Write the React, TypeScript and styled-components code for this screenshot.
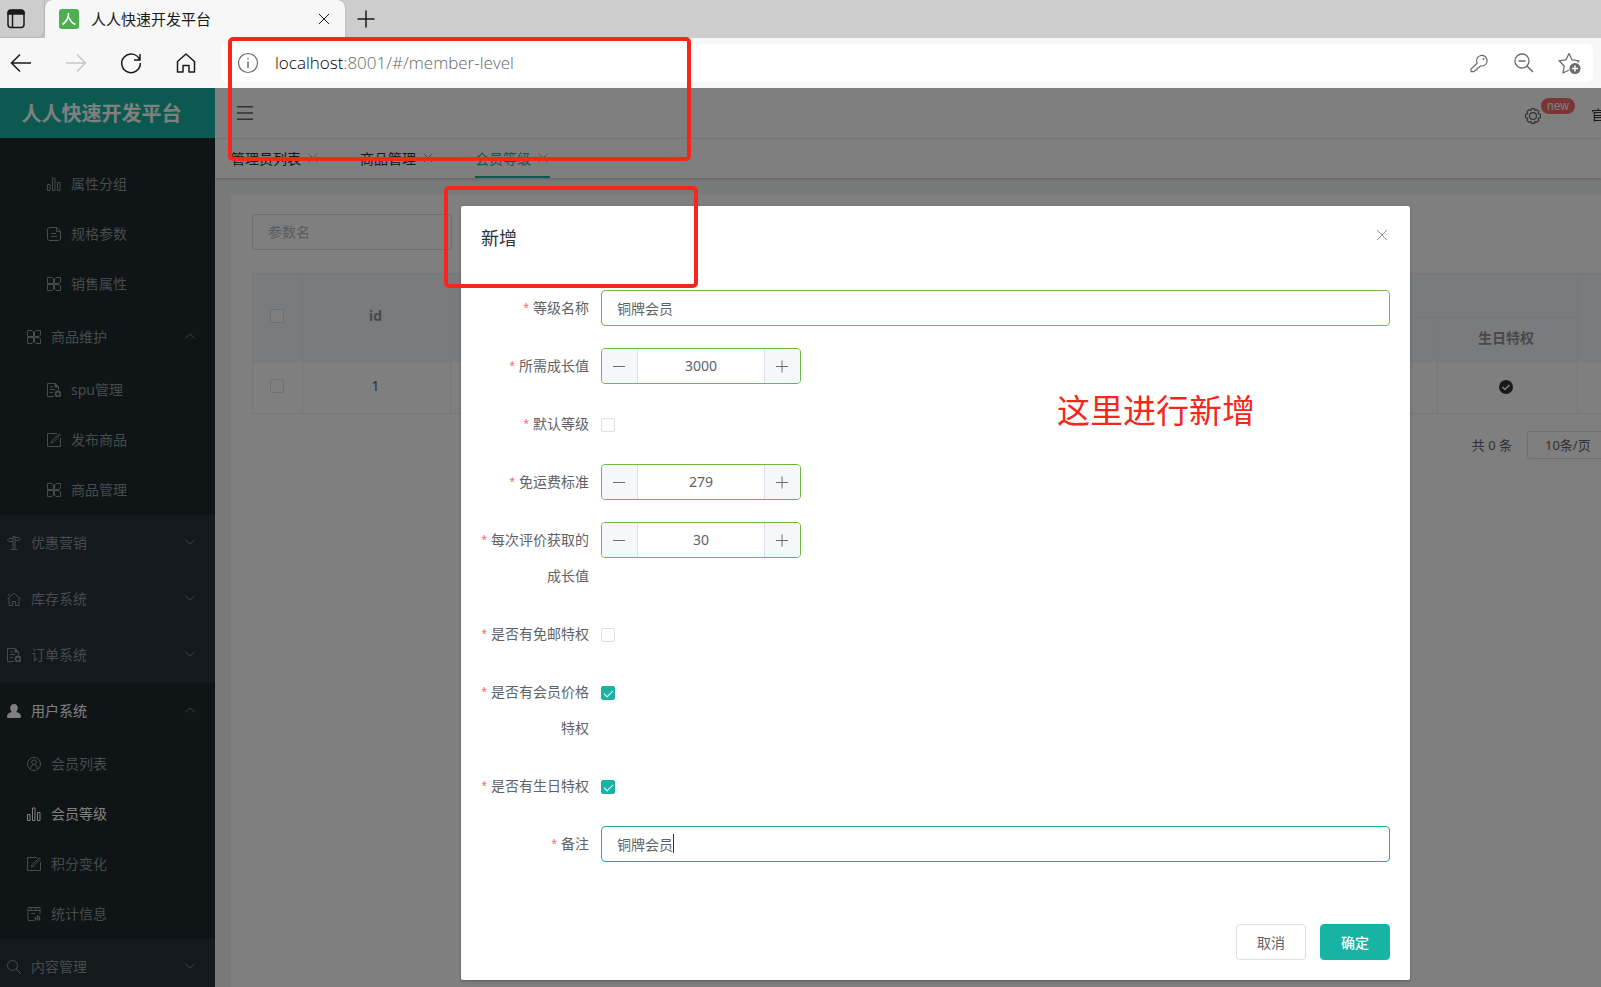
import React, { useState } from "react";
import styled, { createGlobalStyle, css } from "styled-components";

const GlobalStyle = createGlobalStyle`
  * { box-sizing: border-box; }
  html, body { margin: 0; height: 100%; }
  body, button, input, select {
    font-family: "Noto Sans", "Noto Sans CJK SC", sans-serif;
    font-size: 14px;
  }
  button { cursor: pointer; }
`;

const Page = styled.div`
  position: relative;
  display: flex;
  flex-direction: column;
  height: 100vh;
  overflow: hidden;
`;

/* ---------- Browser frame ---------- */

const PlainButton = styled.button`
  display: flex;
  align-items: center;
  justify-content: center;
  padding: 0;
  border: 0;
  background: none;
  color: inherit;
`;

const TabStrip = styled.div`
  display: flex;
  align-items: center;
  height: 38px;
  flex: none;
  background: #cdcdcd;
  color: #1a1a1a;
`;

const TabActions = styled(PlainButton)`
  width: 45px;
  height: 38px;
  padding-right: 13px;
  border-radius: 0 0 6px 0;
  box-shadow: inset -1px -1px 1px #b8b8b8;
`;

const BrowserTab = styled.div`
  display: flex;
  align-items: center;
  gap: 12px;
  width: 300px;
  height: 38px;
  padding: 0 14px;
  background: #f7f7f7;
  border-radius: 8px 8px 0 0;
  box-shadow: 0 0 2px #a8a8a8;
  font-size: 15px;
`;

const TabTitle = styled.span`
  flex: 1;
  padding-bottom: 2px;
`;

const NewTab = styled(PlainButton)`
  width: 42px;
  height: 38px;
`;

const Toolbar = styled.div`
  position: relative;
  display: flex;
  align-items: center;
  height: 50px;
  flex: none;
  padding-right: 8px;
  background: #f7f7f7;
  color: #1a1a1a;
`;

const NavButtons = styled.div`
  display: flex;
  gap: 31px;
  width: 221px;
  padding-left: 9px;
`;

const NavButton = styled(PlainButton)`
  width: 24px;
  height: 24px;
  color: ${(p) => (p.disabled ? "#c6c6c6" : "#1a1a1a")};
`;

const AddressBar = styled.div`
  display: flex;
  align-items: center;
  flex: 1;
  gap: 21px;
  height: 38px;
  padding: 0 12px 0 17px;
  border-radius: 6px;
  background: #fff;
  color: #6b6b6b;
`;

const Url = styled.div`
  flex: 1;
  margin-left: -8px;
  padding-bottom: 2px;
  font-family: "Open Sans", "Noto Sans", sans-serif;
  font-size: 17px;
  font-weight: 300;
  color: #666;
`;

const Host = styled.span`
  color: #000;
`;

/* ---------- Application shell ---------- */

const AppArea = styled.div`
  position: relative;
  display: flex;
  flex: 1;
  min-height: 0;
  background: #f1f4f5;
`;

const Sidebar = styled.nav`
  width: 215px;
  flex: none;
  overflow: hidden;
  background: #263238;
`;

const Brand = styled.h1`
  display: flex;
  align-items: center;
  justify-content: center;
  height: 50px;
  margin: 0;
  padding: 0 12px 2px 0;
  background: #17b3a3;
  color: #fff;
  font-size: 20px;
  font-weight: 700;
`;

const MenuGroup = styled.div<{ $dark?: boolean; $clipped?: boolean }>`
  padding-top: ${(p) => (p.$clipped ? 21 : 0)}px;
  background: ${(p) => (p.$dark ? "#1e282c" : "transparent")};
`;

const MenuEntry = styled.a<{ $level: number; $tall?: boolean; $active?: boolean }>`
  display: flex;
  align-items: center;
  gap: 10px;
  height: ${(p) => (p.$tall ? 56 : 50)}px;
  padding: 0 18px 0 ${(p) => 7 + p.$level * 20}px;
  color: ${(p) => (p.$active ? "#fff" : "#8a979e")};
  text-decoration: none;
`;

const MenuLabel = styled.span`
  flex: 1;
  padding-bottom: 2px;
`;

const MenuArrow = styled.span`
  display: flex;
  padding: 0 1px 3px 0;
  color: #8a979e;
`;

const Main = styled.div`
  display: flex;
  flex-direction: column;
  flex: 1;
  min-width: 0;
`;

const TopBar = styled.header`
  display: flex;
  align-items: center;
  height: 51px;
  flex: none;
  padding-left: 22px;
  background: #fff;
  border-bottom: 1px solid #f0f1f4;
  color: #606266;
`;

const Spacer = styled.div`
  flex: 1;
`;

const SettingsButton = styled(PlainButton)`
  position: relative;
  width: 16px;
  height: 16px;
  margin: 6px 50px 0 0;
`;

const Badge = styled.span`
  position: absolute;
  left: 16px;
  top: -10px;
  height: 16px;
  padding: 0 6px;
  border-radius: 8px;
  background: #f56c6c;
  color: #fff;
  font: 12px/16px "Liberation Sans", sans-serif;
`;

const SiteLink = styled.a`
  width: 10px;
  overflow: hidden;
  white-space: nowrap;
  margin-top: 2px;
  color: #303133;
  text-decoration: none;
`;

const PageTabs = styled.div`
  display: flex;
  gap: 40px;
  height: 39px;
  flex: none;
  padding-left: 16px;
  background: #fff;
  box-shadow: 0 1px 3px rgba(0, 0, 0, 0.2);
`;

const PageTab = styled.div<{ $active?: boolean }>`
  display: flex;
  align-items: center;
  gap: 5px;
  color: ${(p) => (p.$active ? "#17b3a3" : "#303133")};
  border-bottom: 2px solid ${(p) => (p.$active ? "#17b3a3" : "transparent")};
`;

const TabClose = styled(PlainButton)`
  width: 14px;
  height: 14px;
  color: #909399;
`;

const Card = styled.section`
  flex: 1;
  margin: 16px 0 0 16px;
  padding: 19px 0 0 20px;
  background: #fff;
  border: 1px solid #fcfcfd;
  border-width: 1px 0 0 1px;
`;

const SearchInput = styled.input`
  display: block;
  width: 200px;
  height: 36px;
  padding: 0 15px 2px;
  border: 1px solid #dcdfe6;
  border-radius: 4px;
  &::placeholder { color: #b4b8c0; }
`;

const DataTable = styled.table`
  width: 100%;
  margin-top: 23px;
  table-layout: fixed;
  border-collapse: collapse;
  color: #606266;
  line-height: 20px;
  text-align: center;
  th, td {
    padding: 0 2px 4px 0;
    border: 1px solid #ebeef5;
    border-right: 0;
  }
  th {
    height: 44px;
    background: #f5f7fa;
    color: #909399;
    font-weight: 700;
  }
  td { height: 52px; }
  svg { vertical-align: middle; }
  input { display: flex; margin: 0 auto; }
`;

const Column = styled.col<{ $width?: number }>`
  width: ${(p) => (p.$width ? `${p.$width}px` : "auto")};
`;

const Pagination = styled.div`
  display: flex;
  align-items: center;
  justify-content: flex-end;
  gap: 15px;
  margin-top: 17px;
  color: #606266;
`;

const Total = styled.span`
  padding-bottom: 2px;
  font-size: 13px;
`;

const PageSize = styled.select`
  appearance: none;
  width: 74px;
  height: 28px;
  padding: 0 0 0 17px;
  border: 1px solid #dcdfe6;
  border-right: 0;
  border-radius: 3px 0 0 3px;
  background: #fff;
  color: #606266;
  font-size: 13px;
`;

/* ---------- Dialog ---------- */

const Overlay = styled.div`
  position: absolute;
  inset: 0;
  background: rgba(0, 0, 0, 0.5);
`;

const Dialog = styled.form`
  margin: 118px 191px 0 461px;
  background: #fff;
  border-radius: 2px;
  box-shadow: 0 1px 3px rgba(0, 0, 0, 0.3);
`;

const DialogHeader = styled.header`
  display: flex;
  justify-content: space-between;
  padding: 20px 20px 10px;
`;

const DialogTitle = styled.h2`
  margin: 0;
  color: #303133;
  font-size: 18px;
  font-weight: 400;
  line-height: 24px;
`;

const DialogClose = styled(PlainButton)`
  width: 16px;
  height: 18px;
  color: #909399;
`;

const DialogBody = styled.div`
  padding: 30px 20px;
`;

const FormRow = styled.div`
  display: flex;
  align-items: flex-start;
  margin-bottom: 22px;
`;

const FieldLabel = styled.label`
  width: 120px;
  flex: none;
  padding-right: 12px;
  color: #606266;
  line-height: 36px;
  text-align: right;
  white-space: pre;
`;

const Required = styled.span`
  margin-right: 4px;
  color: #f56c6c;
  font-family: "Liberation Sans", sans-serif;
`;

const TextInput = styled.input`
  flex: 1;
  min-width: 0;
  height: 36px;
  padding: 0 15px 1px;
  border: 1px solid #6cb944;
  border-radius: 4px;
  outline: 0;
  color: #606266;
  caret-color: transparent;
  &:focus { border-color: #17b3a3; }
`;

const CaretField = styled.div`
  position: relative;
  display: flex;
  flex: 1;
`;

const Caret = styled.span`
  position: absolute;
  left: 72px;
  top: 8px;
  width: 1px;
  height: 19px;
  background: #303133;
`;

const Stepper = styled.div`
  display: flex;
  width: 200px;
  height: 36px;
  overflow: hidden;
  border: 1px solid #6cb944;
  border-radius: 4px;
`;

const StepButton = styled(PlainButton)`
  width: 35px;
  background: #f5f7fa;
  color: #606266;
`;

const StepInput = styled.input`
  flex: 1;
  min-width: 0;
  padding: 0 0 1px;
  border: solid #dcdfe6;
  border-width: 0 1px;
  outline: 0;
  color: #606266;
  text-align: center;
`;

const tick = css`
  &:checked {
    border-color: #17b3a3;
    background: #17b3a3;
  }
  &:checked::after {
    content: "";
    width: 4px;
    height: 8px;
    margin-bottom: 2px;
    border: solid #fff;
    border-width: 0 1px 1px 0;
    transform: rotate(45deg);
  }
`;

const Checkbox = styled.input.attrs({ type: "checkbox" })`
  appearance: none;
  display: inline-flex;
  align-items: center;
  justify-content: center;
  width: 14px;
  height: 14px;
  margin: 0;
  border: 1px solid #dcdfe6;
  border-radius: 2px;
  background: #fff;
  ${tick}
`;

const CheckField = styled.div`
  display: flex;
  align-items: center;
  height: 36px;
  padding-top: 2px;
`;

const DialogFooter = styled.footer`
  display: flex;
  justify-content: flex-end;
  gap: 14px;
  padding: 10px 20px 20px;
`;

const ActionButton = styled.button<{ $primary?: boolean }>`
  width: 70px;
  height: 36px;
  padding: 0 0 1px;
  border: 1px solid ${(p) => (p.$primary ? "#17b3a3" : "#dcdfe6")};
  border-radius: 4px;
  background: ${(p) => (p.$primary ? "#17b3a3" : "#fff")};
  color: ${(p) => (p.$primary ? "#fff" : "#606266")};
  font-weight: ${(p) => (p.$primary ? 500 : 400)};
`;

/* ---------- Red mark-up drawn over the page ---------- */

const MarkBox = styled.div<{ $x: number; $y: number; $w: number; $h: number }>`
  position: absolute;
  left: ${(p) => p.$x}px;
  top: ${(p) => p.$y}px;
  width: ${(p) => p.$w}px;
  height: ${(p) => p.$h}px;
  border: 4px solid #f7261b;
  border-radius: 5px;
  pointer-events: none;
`;

const MarkText = styled.p`
  position: absolute;
  left: 1057px;
  top: 387px;
  margin: 0;
  color: #f7261b;
  font-size: 33px;
  line-height: 48px;
  pointer-events: none;
`;

/* ---------- Icons ---------- */

const shapes: Record<string, React.ReactNode> = {
  bars: <path d="M.5 7.5H3v6H.5zM5.500 1H8v12.500H5.500zM10.500 5.500H13v8h-2.500z" />,
  doc: <path d="M.5 2 2 .5h8L13.500 4v8L12 13.500H2L.5 12zM9.500 .5v4h4M4 6.500h5M4 9.500h6" />,
  grid: <path d="M.5 .5h4.500l1.500 1.500v4.500H.5zM9 .5h4.500v4.500L12 6.500H7.500V2zM.5 7.500h6V12L5 13.500H.5zM7.500 7.500H12l1.500 1.500v4.500H9L7.500 12z" />,
  order: <><path d="M7 13.500H.5V.5h7.500l3.500 3.500v3M3 4h3M3 6.500h5M3 9.500h3" /><path d="M8 .5V4h3.500z" fill="currentColor" /><circle cx="11" cy="11" r="2.500" strokeWidth="1.800" /></>,
  edit: <path d="M10 .5H.5v13h13V5M4.500 10l.5-2.500L12.500 .8l1 1L6.500 9z" />,
  sign: <><path d="M6 .5h2v13H6zM6 2.500H2L.5 4 2 5.500h4M8 1.500h4l1.500 1.500L12 4.500H8M3.500 13.500h7" /></>,
  home: <path d="M.5 7 7 1l6.500 6M2 6v7.500h3.500V9.500h3v4H12V6M2 4V1.500" />,
  user: <path d="M7 0a3.700 3.700 0 0 1 3.700 4.200c0 1.800-.8 3.200-1.700 3.900 2.800.6 5 1.800 5 4.400 0 1-.6 1.500-1.500 1.500h-11C.6 14 0 13.500 0 12.500c0-2.600 2.200-3.800 5-4.400C4.100 7.400 3.300 6 3.300 4.200A3.700 3.700 0 0 1 7 0z" fill="currentColor" stroke="none" />,
  member: <><circle cx="7" cy="7" r="6.500" /><circle cx="7" cy="5.300" r="2.300" /><path d="M3.500 12c0-2.500 1.300-4.300 3.500-4.300s3.500 1.800 3.500 4.300" /></>,
  stats: <><path d="M7 13.500H1V.5h12V7M1 3.500h12M4 3.500V1M9 3.500V1M4 6.500h4" /><path d="M8.500 10v3.500M10.500 8v5.500M12.500 9v4.500" strokeWidth="1.400" /></>,
  search: <><circle cx="5.500" cy="5.500" r="5" /><path d="m9 9 5 5" /></>,
  down: <path d="m1.500 4.500 5.500 5 5.500-5" />,
  up: <path d="m1.500 9.500 5.500-5 5.500 5" />,
  close: <path d="m2 2 10 10M12 2 2 12" />,
  minus: <path d="M0 7h13" />,
  plus: <path d="M0 7h13M6.500 .5v13" />,
  menu: <path d="M0 1.500h14M0 7h14M0 12.500h14" strokeWidth="1.300" />,
  gear: <><circle cx="7" cy="7" r="3" /><path d="M5.800 .5h2.400l.5 1.700 1.700-.7 1.700 1.700-.7 1.600 2.100.9v2.600l-2 .7.7 1.800-1.800 1.700-1.700-.7-.5 1.700H5.800l-.7-1.700-1.700.7-1.700-1.700.6-1.700-1.800-.8V5.700l1.800-.7-.6-1.800 1.700-1.700 1.700.7z" /></>,
  done: <><circle cx="7" cy="7" r="7" fill="#303133" stroke="none" /><path d="m3.500 7 2.500 2.500L10.500 5" stroke="#fff" strokeWidth="1.500" /></>,
};

function Icon({ name, size = 14 }: { name: string; size?: number }) {
  return (
    <svg width={size} height={size} viewBox="0 0 14 14" fill="none" stroke="currentColor" aria-hidden="true">
      {shapes[name]}
    </svg>
  );
}

const Glyph = styled.svg.attrs({ viewBox: "0 0 24 24", fill: "none", stroke: "currentColor", strokeWidth: 1.5, "aria-hidden": true })`
  width: 24px;
  height: 24px;
  flex: none;
`;

/* ---------- Content ---------- */

type Item = { icon: string; label: string; level: number; arrow?: "up" | "down"; active?: boolean };

const menu: { dark?: boolean; clipped?: boolean; items: Item[] }[] = [
  {
    dark: true,
    clipped: true,
    items: [
      { icon: "bars", label: "属性分组", level: 2 },
      { icon: "doc", label: "规格参数", level: 2 },
      { icon: "grid", label: "销售属性", level: 2 },
      { icon: "grid", label: "商品维护", level: 1, arrow: "up" },
      { icon: "order", label: "spu管理", level: 2 },
      { icon: "edit", label: "发布商品", level: 2 },
      { icon: "grid", label: "商品管理", level: 2 },
    ],
  },
  {
    items: [
      { icon: "sign", label: "优惠营销", level: 0, arrow: "down" },
      { icon: "home", label: "库存系统", level: 0, arrow: "down" },
      { icon: "order", label: "订单系统", level: 0, arrow: "down" },
    ],
  },
  {
    dark: true,
    items: [
      { icon: "user", label: "用户系统", level: 0, arrow: "up", active: true },
      { icon: "member", label: "会员列表", level: 1 },
      { icon: "bars", label: "会员等级", level: 1, active: true },
      { icon: "edit", label: "积分变化", level: 1 },
      { icon: "stats", label: "统计信息", level: 1 },
    ],
  },
  { items: [{ icon: "search", label: "内容管理", level: 0, arrow: "down" }] },
];

function Field({ id, label, children }: { id: string; label: string; children: React.ReactNode }) {
  return (
    <FormRow>
      <FieldLabel htmlFor={id}>
        <Required>*</Required>
        {label}
      </FieldLabel>
      {children}
    </FormRow>
  );
}

function NumberField({ id, label, initial }: { id: string; label: string; initial: number }) {
  const [value, setValue] = useState(initial);
  return (
    <Field id={id} label={label}>
      <Stepper>
        <StepButton type="button" aria-label="减少" onClick={() => setValue(value - 1)}>
          <Icon name="minus" size={13} />
        </StepButton>
        <StepInput id={id} value={value} onChange={(e) => setValue(Number(e.target.value) || 0)} />
        <StepButton type="button" aria-label="增加" onClick={() => setValue(value + 1)}>
          <Icon name="plus" size={13} />
        </StepButton>
      </Stepper>
    </Field>
  );
}

function CheckRow({ id, label, checked }: { id: string; label: string; checked?: boolean }) {
  return (
    <Field id={id} label={label}>
      <CheckField>
        <Checkbox id={id} defaultChecked={checked} />
      </CheckField>
    </Field>
  );
}

export default function App() {
  return (
    <Page>
      <GlobalStyle />
      <TabStrip>
        <TabActions aria-label="标签页操作">
          <Glyph>
            <rect x="4" y="3.500" width="16" height="17" rx="3" />
            <path d="M4 7V6a3 3 0 0 1 3-3h10a3 3 0 0 1 3 3v1z" fill="currentColor" />
            <path d="M8.500 7v13" />
          </Glyph>
        </TabActions>
        <BrowserTab>
          <svg width="20" height="20" viewBox="0 0 20 20" aria-hidden="true">
            <rect width="20" height="20" rx="3" fill="#4caf50" />
            <path d="M9.500 4c.3 5-2 8.500-6 11.500M10 8.500c1 3 3 5.500 6.500 7" fill="none" stroke="#fff" strokeWidth="1.600" />
          </svg>
          <TabTitle>人人快速开发平台</TabTitle>
          <PlainButton aria-label="关闭标签页">
            <Icon name="close" />
          </PlainButton>
        </BrowserTab>
        <NewTab aria-label="新建标签页">
          <Glyph><path d="M3.500 12h17M12 3.500v17" /></Glyph>
        </NewTab>
      </TabStrip>
      <Toolbar>
        <NavButtons>
          <NavButton aria-label="后退"><Glyph><path d="M22 12H2.500M11 3.500 2.500 12l8.500 8.500" /></Glyph></NavButton>
          <NavButton aria-label="前进" disabled><Glyph><path d="M2 12h19.500M13 3.500l8.500 8.500-8.500 8.500" /></Glyph></NavButton>
          <NavButton aria-label="刷新"><Glyph><path d="M20.500 8.500A9.300 9.300 0 1 0 21.300 12M21 3v6h-6" /></Glyph></NavButton>
          <NavButton aria-label="主页"><Glyph><path d="M3.500 10.500 12 3l8.500 7.500V21H15v-6.500H9V21H3.500z" strokeLinejoin="round" /></Glyph></NavButton>
        </NavButtons>
        <AddressBar>
          <Glyph><circle cx="10" cy="12" r="9.500" strokeWidth="1.200" /><path d="M10 10.500V17M10 7v1.500" /></Glyph>
          <Url><Host>localhost</Host>:8001/#/member-level</Url>
          <Glyph>
            <path d="M10.200 12.200a5.300 5.300 0 1 1 3.300 2.600L11.500 17H10v2H8.500l-1.700 1.700H4V18z" strokeWidth="1.200" strokeLinejoin="round" />
            <circle cx="16.500" cy="8" r="1" fill="currentColor" stroke="none" />
          </Glyph>
          <Glyph><circle cx="10" cy="10" r="7" strokeWidth="1.300" /><path d="M6.500 10h7M15 15l6 6" /></Glyph>
          <Glyph>
            <path d="M12 19l-6 3 1.200-7L2 9.800l7-1L12 2.500l3 6.300 7 1-1.500 1.700" strokeWidth="1.300" strokeLinejoin="round" />
            <circle cx="18" cy="17.500" r="5.500" fill="currentColor" stroke="none" />
            <path d="M15 17.500h6M18 14.500v6" stroke="#fff" />
          </Glyph>
        </AddressBar>
      </Toolbar>
      <AppArea>
        <Sidebar>
          <Brand>人人快速开发平台</Brand>
          {menu.map((group, i) => (
            <MenuGroup key={i} $dark={group.dark} $clipped={group.clipped}>
              {group.items.map((item) => (
                <MenuEntry key={item.label} href="#" $level={item.level} $tall={!!item.arrow} $active={item.active}>
                  <Icon name={item.icon} />
                  <MenuLabel>{item.label}</MenuLabel>
                  {item.arrow && (
                    <MenuArrow>
                      <Icon name={item.arrow} size={12} />
                    </MenuArrow>
                  )}
                </MenuEntry>
              ))}
            </MenuGroup>
          ))}
        </Sidebar>
        <Main>
          <TopBar>
            <PlainButton aria-label="折叠菜单"><Icon name="menu" size={16} /></PlainButton>
            <Spacer />
            <SettingsButton aria-label="设置">
              <Icon name="gear" size={16} />
              <Badge>new</Badge>
            </SettingsButton>
            <SiteLink href="#">官</SiteLink>
          </TopBar>
          <PageTabs>
            {["管理员列表", "商品管理", "会员等级"].map((name) => (
              <PageTab key={name} $active={name === "会员等级"}>
                {name}
                <TabClose aria-label={`关闭${name}`}><Icon name="close" size={12} /></TabClose>
              </PageTab>
            ))}
          </PageTabs>
          <Card>
            <SearchInput placeholder="参数名" aria-label="参数名" />
            <DataTable>
              <colgroup>
                <Column $width={50} />
                <Column $width={148} />
                <Column />
                <Column $width={140} />
                <Column $width={24} />
              </colgroup>
              <thead>
                <tr>
                  <th rowSpan={2}><Checkbox aria-label="全选" /></th>
                  <th rowSpan={2}>id</th>
                  <th colSpan={2} />
                  <th rowSpan={2} />
                </tr>
                <tr>
                  <th />
                  <th>生日特权</th>
                </tr>
              </thead>
              <tbody>
                <tr>
                  <td><Checkbox aria-label="选择第 1 行" /></td>
                  <td>1</td>
                  <td />
                  <td><Icon name="done" /></td>
                  <td />
                </tr>
              </tbody>
            </DataTable>
            <Pagination>
              <Total>共 0 条</Total>
              <PageSize aria-label="每页条数">
                <option>10条/页</option>
              </PageSize>
            </Pagination>
          </Card>
        </Main>
        <Overlay>
          <Dialog role="dialog" aria-label="新增" onSubmit={(e) => e.preventDefault()}>
            <DialogHeader>
              <DialogTitle>新增</DialogTitle>
              <DialogClose type="button" aria-label="关闭"><Icon name="close" /></DialogClose>
            </DialogHeader>
            <DialogBody>
              <Field id="name" label="等级名称">
                <TextInput id="name" defaultValue="铜牌会员" />
              </Field>
              <NumberField id="growth" label="所需成长值" initial={3000} />
              <CheckRow id="default" label="默认等级" />
              <NumberField id="freight" label="免运费标准" initial={279} />
              <NumberField id="comment" label={"每次评价获取的\n成长值"} initial={30} />
              <CheckRow id="free" label="是否有免邮特权" />
              <CheckRow id="price" label={"是否有会员价格\n特权"} checked />
              <CheckRow id="birthday" label="是否有生日特权" checked />
              <Field id="note" label="备注">
                <CaretField>
                  <TextInput id="note" defaultValue="铜牌会员" autoFocus />
                  <Caret />
                </CaretField>
              </Field>
            </DialogBody>
            <DialogFooter>
              <ActionButton type="button">取消</ActionButton>
              <ActionButton type="submit" $primary>确定</ActionButton>
            </DialogFooter>
          </Dialog>
        </Overlay>
      </AppArea>
      <MarkBox $x={228} $y={37} $w={463} $h={124} />
      <MarkBox $x={444} $y={186} $w={254} $h={102} />
      <MarkText>这里进行新增</MarkText>
    </Page>
  );
}
